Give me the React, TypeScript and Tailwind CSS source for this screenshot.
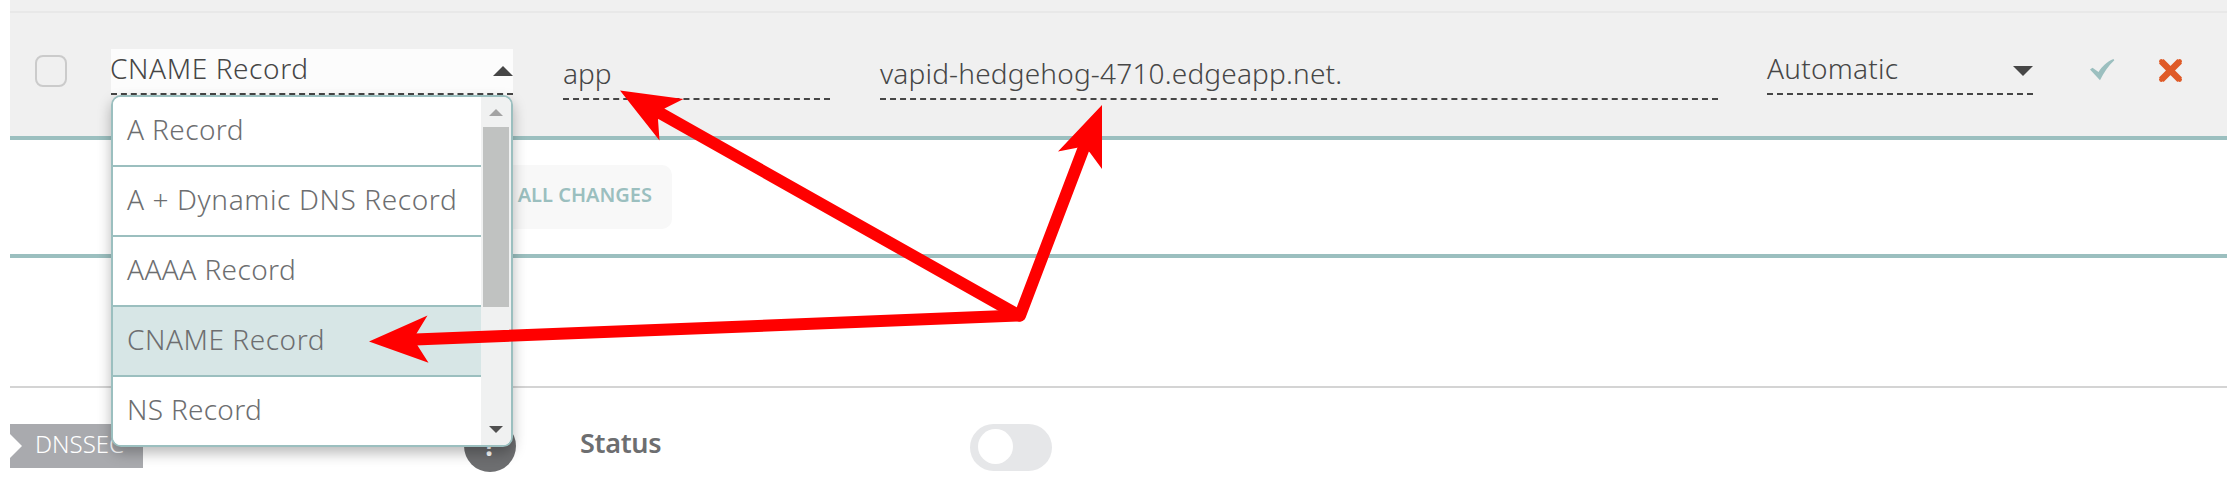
type Option = { label: string; tracking: string };

const options: Option[] = [
  { label: "A Record", tracking: "tracking-[0.4px]" },
  { label: "A + Dynamic DNS Record", tracking: "tracking-[0.62px]" },
  { label: "AAAA Record", tracking: "tracking-[0.4px]" },
  { label: "CNAME Record", tracking: "tracking-[0.55px]" },
  { label: "NS Record", tracking: "tracking-[0.3px]" },
];

function Caret({ up = false }: { up?: boolean }) {
  return (
    <svg width="20" height="10" viewBox="0 0 20 10" className="shrink-0">
      <path d={up ? "M0 10 10 0 20 10Z" : "M0 0H20L10 10Z"} fill="#464646" />
    </svg>
  );
}

function Dropdown() {
  return (
    <div className="absolute left-0 top-[46px] z-10 flex h-[352px] w-[402px] overflow-hidden rounded-[10px] border-2 border-[#9bbfbf] bg-white shadow-[0_6px_14px_rgba(0,0,0,0.28)]">
      <ul className="flex-1 text-[28px] leading-[68px] text-[#6d6e70]">
        {options.map((o) => (
          <li
            key={o.label}
            className={`h-[70px] border-b-2 border-[#9bbfbf] pl-[14px] whitespace-nowrap ${
              o.label === "CNAME Record" ? "bg-[#d7e6e6]" : "bg-white"
            }`}
          >
            <span className={`relative top-[-2px] ${o.tracking}`}>{o.label}</span>
          </li>
        ))}
      </ul>
      <div className="flex w-[30px] flex-col bg-[#f0f1f1] pl-[2px]">
        <div className="flex h-[30px] items-center pt-[1px] pl-[6px]">
          <svg width="14" height="7" viewBox="0 0 14 7">
            <path d="M0 7 7 0 14 7Z" fill="#a3a3a3" />
          </svg>
        </div>
        <div className="h-[180px] w-[26px] bg-[#c0c2c1]" />
        <div className="mt-auto flex h-[30px] items-center pl-[6px]">
          <svg width="14" height="7" viewBox="0 0 14 7" className="mt-[-1px]">
            <path d="M0 0H14L7 7Z" fill="#505050" />
          </svg>
        </div>
      </div>
    </div>
  );
}

function Arrows() {
  return (
    <svg
      className="pointer-events-none absolute inset-0 z-20"
      width="2239"
      height="484"
      viewBox="0 0 2239 484"
      fill="#ff0000"
    >
      <g stroke="#ff0000" strokeWidth="12" strokeLinecap="round">
        <path d="M1019 315.5 415 339.5" />
        <path d="M1019 315.5 660 113" />
        <path d="M1020 315.5 1083 150" />
      </g>
      <path d="M369 341.5 427.500 315.500 416.500 333.500 417.500 345.500 428.500 362.700Z" />
      <path d="M620 90.500 683.500 99 664.500 108.500 658 119.500 659.500 140.500Z" />
      <path d="M1102 105 1058 151.500 1078.500 147.500 1089.500 152 1102 169Z" />
    </svg>
  );
}

export default function App() {
  return (
    <div className="relative h-[484px] w-[2239px] overflow-hidden bg-white px-[10px] pr-[12px] font-['Noto_Sans','Open_Sans',sans-serif] font-light">
      <div className="h-[11px] bg-[#f0f0f0]" />
      <div className="flex h-[129px] items-start border-t-2 border-b-4 border-t-[#e8e8e8] border-b-[#9bbfbf] bg-[#f0f0f0] text-[28px] text-[#464646]">
        <div className="mt-[42px] ml-[25px] h-8 w-8 rounded-lg border-2 border-[#cbcbcb]" />
        <div className="relative mt-[36px] ml-[44px] flex h-[46px] w-[402px] items-center justify-between border-b-2 border-dashed border-[#464646] bg-[#fcfcfc]">
          <span className="mt-[-6px] ml-[-1px] tracking-[0.6px]">CNAME Record</span>
          <Caret up />
          <Dropdown />
        </div>
        <div className="mt-[41px] ml-[50px] flex h-[46px] w-[267px] items-center border-b-2 border-dashed border-[#464646]">
          <span className="mt-[-6px]">app</span>
        </div>
        <div className="mt-[41px] ml-[50px] flex h-[46px] w-[838px] items-center border-b-2 border-dashed border-[#464646]">
          <span className="mt-[-6px] tracking-[0.18px]">vapid-hedgehog-4710.edgeapp.net.</span>
        </div>
        <div className="mt-[36px] ml-[49px] flex h-[46px] w-[266px] items-center justify-between border-b-2 border-dashed border-[#464646]">
          <span className="mt-[-6px] tracking-[0.25px]">Automatic</span>
          <Caret />
        </div>
        <svg width="25" height="22" viewBox="0 0 25 22" className="mt-[46px] ml-[57px]">
          <path d="M0 10.500 2.500 8.700 8.500 13C12.500 7 17 2.500 23.500 0L24.300 1.300C18.500 7 14 13 10 21.300Z" fill="#9bbfbf" />
        </svg>
        <svg width="25" height="25" viewBox="0 0 25 25" className="mt-[45px] ml-[43px]">
          <g fill="none" stroke="#df5a27">
            <path d="M3.300 3.300 21.700 21.700M21.700 3.300 3.300 21.700" strokeWidth="6.500" />
            <path d="M3.300 3.300 21.700 21.700M21.700 3.300 3.300 21.700" strokeWidth="4.500" strokeLinecap="round" />
          </g>
        </svg>
      </div>

      <div className="flex h-[118px] items-start border-b-4 border-[#9bbfbf]">
        <button className="mt-[25px] ml-[362px] flex h-[64px] w-[300px] items-center justify-end rounded-[10px] bg-[#f8f8f8] pr-[20px] pb-[4px] text-[20px] font-semibold text-[#9bbfbf]">
          SAVE ALL CHANGES
        </button>
      </div>

      <div className="h-[130px] border-b-2 border-[#d4d4d4]" />

      <div className="flex items-start">
        <div className="relative mt-[36px] flex h-[44px] w-[133px] items-center bg-[#a9aaae] pb-[4px] pl-[25px] text-[24px] text-white">
          <svg width="12" height="24" viewBox="0 0 12 24" className="absolute top-[10px] left-0">
            <path d="M0 0 12 12 0 24Z" fill="#fff" />
          </svg>
          DNSSEC
        </div>
        <div className="mt-[32px] ml-[321px] flex h-[52px] w-[52px] items-center justify-center rounded-full bg-[#6d6e70] pb-[2px] text-[28px] font-bold text-white">
          ?
        </div>
        <div className="mt-[35px] ml-[64px] w-[390px] text-[27px] leading-[40px] font-semibold tracking-[-0.3px] text-[#6d6e70]">
          Status
        </div>
        <div className="mt-[36px] flex h-[47px] w-[82px] items-center rounded-full bg-[#e6e7e9] pl-[8px] pb-[2px]">
          <div className="h-[35px] w-[35px] rounded-full bg-white" />
        </div>
      </div>

      <Arrows />
    </div>
  );
}
